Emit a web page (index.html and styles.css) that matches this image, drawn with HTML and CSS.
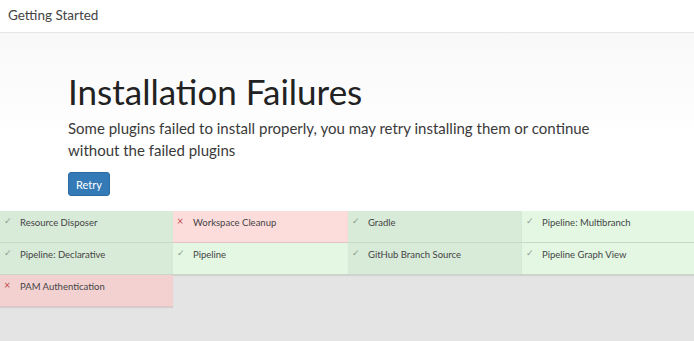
FILE: index.html
```html
<!DOCTYPE html>
<html>
<head>
<meta charset="utf-8">
<link rel="stylesheet" href="styles.css">
</head>
<body>
<header class="topbar">Getting Started</header>
<section class="hero">
  <h1 class="title">Installation Failures</h1>
  <p class="lead">Some plugins failed to install properly, you may retry installing them or continue without the failed plugins</p>
  <button class="btn">Retry</button>
</section>
<section class="plugins">
  <div class="tile ok">Resource Disposer</div>
  <div class="tile fail">Workspace Cleanup</div>
  <div class="tile ok">Gradle</div>
  <div class="tile ok2">Pipeline: Multibranch</div>
  <div class="tile ok">Pipeline: Declarative</div>
  <div class="tile ok2">Pipeline</div>
  <div class="tile ok">GitHub Branch Source</div>
  <div class="tile ok2">Pipeline Graph View</div>
  <div class="tile fail2">PAM Authentication</div>
</section>
</body>
</html>
```
FILE: styles.css
```css
html, body {
  margin: 0;
  height: 100%;
}
body {
  font-family: Lato, "Noto Sans", sans-serif;
  background: #e4e4e4;
  color: #333;
  display: flex;
  flex-direction: column;
}
.topbar {
  height: 33px;
  box-sizing: border-box;
  padding: 7px 8px 0;
  font-size: 13.5px;
  color: #444;
  background: #fff;
  border-bottom: 1px solid #e6e6e6;
}
.hero {
  background: linear-gradient(#f8f8f8, #ffffff 60%);
  padding: 36px 68px 16px;
  height: 178px;
  box-sizing: border-box;
}
.title {
  margin: 0;
  font-weight: 400;
  font-size: 35px;
  line-height: 44px;
  color: #222;
}
.lead {
  margin: 4px 0 11px;
  font-size: 15px;
  line-height: 22px;
  color: #3a3a3a;
  max-width: 560px;
}
.btn {
  font-family: inherit;
  font-size: 11px;
  color: #fff;
  background: #337ab7;
  border: 1px solid #2e6da4;
  border-radius: 3px;
  width: 42px;
  height: 24px;
  padding: 0;
}
.plugins {
  display: grid;
  grid-template-columns: 173px 175px 174px 172px;
  grid-auto-rows: 32px;
}
.tile {
  font-size: 9.5px;
  color: #444;
  padding: 6px 0 0 20px;
  box-sizing: border-box;
  position: relative;
  border-bottom: 1px solid #c9d6c9;
  box-shadow: 0 1px 1px rgba(0,0,0,0.08);
}
.tile::before {
  position: absolute;
  left: 4px;
  top: 5px;
  font-size: 9px;
  color: #777;
}
.ok { background: #d8ead8; }
.ok2 { background: #e3f7e3; }
.fail { background: #fddcdc; }
.fail2 { background: #f3d1d1; }
.ok::before, .ok2::before { content: "\2713"; color: #8e9a8e; font-family: "DejaVu Sans", sans-serif; font-size: 9px; }
.fail::before, .fail2::before { content: "\00d7"; color: #c05050; top: 3px; font-size: 11px; }
.fail, .fail2 { border-bottom-color: #e3c4c4; }
```
